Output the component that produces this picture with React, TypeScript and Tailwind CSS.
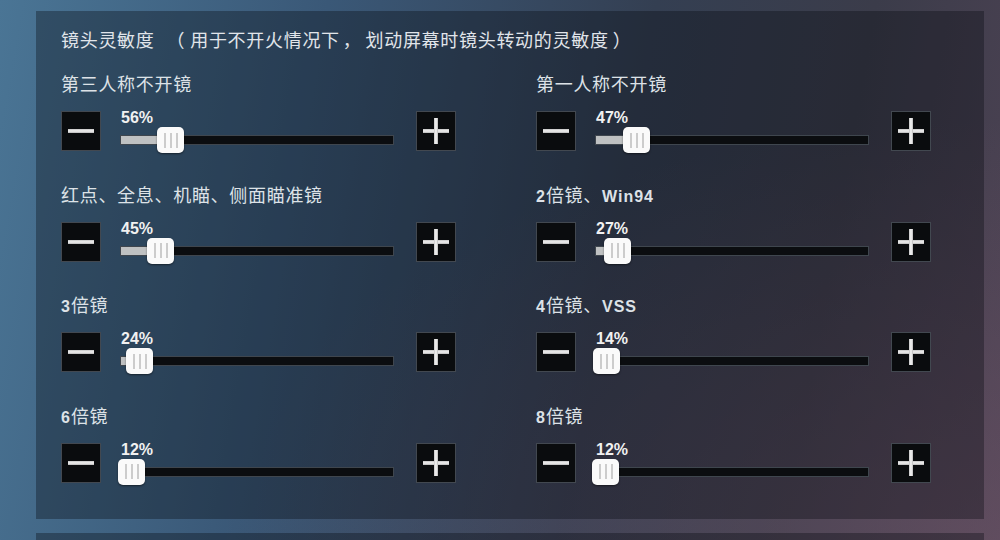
import React from "react";

type Item = { label: string; value: number; offset: number };

const items: Item[] = [
  { label: "第三人称不开镜", value: 56, offset: 37 },
  { label: "第一人称不开镜", value: 47, offset: 28 },
  { label: "红点、全息、机瞄、侧面瞄准镜", value: 45, offset: 27 },
  { label: "2倍镜、Win94", value: 27, offset: 9 },
  { label: "3倍镜", value: 24, offset: 6 },
  { label: "4倍镜、VSS", value: 14, offset: -2 },
  { label: "6倍镜", value: 12, offset: -2 },
  { label: "8倍镜", value: 12, offset: -3 },
];

function Label({ text }: { text: string }) {
  const parts = text.split(/([A-Za-z0-9]+)/).filter((p) => p.length > 0);
  return (
    <div className="h-[22px] leading-[22px] text-[18px] tracking-[0.7px] text-[#dde2e7] whitespace-nowrap">
      {parts.map((p, i) =>
        /^[A-Za-z0-9]+$/.test(p) ? (
          <span key={i} className="font-['Liberation_Sans',sans-serif] font-bold text-[16px] tracking-[1px]">
            {p}
          </span>
        ) : (
          <span key={i}>{p}</span>
        )
      )}
    </div>
  );
}

function SquareButton({ plus }: { plus?: boolean }) {
  return (
    <div className="w-[40px] h-[40px] shrink-0 bg-[#0a0c0e] border border-[#5a636c]/70 flex items-center justify-center relative">
      <div className="w-[26px] h-[4px] bg-[linear-gradient(#c4c4c4,#f2f2f2,#b8b8b8)]" />
      {plus && (
        <div className="absolute w-[4px] h-[26px] bg-[linear-gradient(90deg,#c4c4c4,#f8f8f8,#b8b8b8)]" />
      )}
    </div>
  );
}

function Slider({ value, offset }: { value: number; offset: number }) {
  return (
    <div className="w-[274px] ml-[19px] mr-[22px] flex flex-col">
      <div className="h-[14px] leading-[14px] font-['Liberation_Sans',sans-serif] font-bold text-[16px] text-[#f1f1f1] pl-[1px]">
        {value}%
      </div>
      <div className="relative mt-[10px] h-[10px] bg-[#0b0d10] border border-[#56606a]/70">
        <div
          className="absolute left-0 top-0 bottom-0 bg-[#bfc1c2]"
          style={{ width: Math.max(0, offset + 13) }}
        />
        <div
          className="absolute top-[-9px] w-[27px] h-[26px] rounded-[5px] bg-[#fafafa] shadow-[0_1px_2px_rgba(0,0,0,0.5)] flex items-center justify-center gap-[4px]"
          style={{ left: offset - 1 }}
        >
          <div className="w-[2px] h-[15px] bg-[#cccccc]" />
          <div className="w-[2px] h-[15px] bg-[#cccccc]" />
          <div className="w-[2px] h-[15px] bg-[#cccccc]" />
        </div>
      </div>
    </div>
  );
}

function Cell({ item }: { item: Item }) {
  return (
    <div className="flex flex-col">
      <Label text={item.label} />
      <div className="mt-[17px] flex items-start h-[40px]">
        <SquareButton />
        <Slider value={item.value} offset={item.offset} />
        <SquareButton plus />
      </div>
    </div>
  );
}

export default function App() {
  return (
    <div className="w-[1000px] h-[540px] overflow-hidden relative font-['Noto_Sans_CJK_SC',sans-serif] bg-[linear-gradient(100deg,#4a7595_0%,#3a5877_30%,#343f52_60%,#3b3c4a_80%,#4d4253_100%)]">
      <div className="absolute inset-0 bg-[radial-gradient(ellipse_at_100%_100%,rgba(120,90,110,0.45),transparent_55%)]" />
      <div className="relative pt-[11px] pl-[36px] pr-[16px] flex flex-col gap-[14px]">
        <section className="h-[508px] bg-[rgba(6,9,14,0.34)] pl-[25px] pt-[17px]">
          <div className="h-[22px] leading-[22px] text-[18px] tracking-[0.7px] text-[#e1e5ea] whitespace-nowrap">
            <span>镜头灵敏度</span>
            <span className="ml-[12px] mr-[5px]">（</span>
            <span>用于不开火情况下</span>
            <span className="ml-[3px] mr-[4px]">，</span>
            <span>划动屏幕时镜头转动的灵敏度</span>
            <span className="ml-[4px]">）</span>
          </div>
          <div className="mt-[22px] grid grid-cols-[475px_395px] gap-y-[31.67px]">
            {items.map((it, i) => (
              <Cell key={i} item={it} />
            ))}
          </div>
        </section>
        <section className="h-[40px] bg-[rgba(6,9,14,0.34)]" />
      </div>
    </div>
  );
}
